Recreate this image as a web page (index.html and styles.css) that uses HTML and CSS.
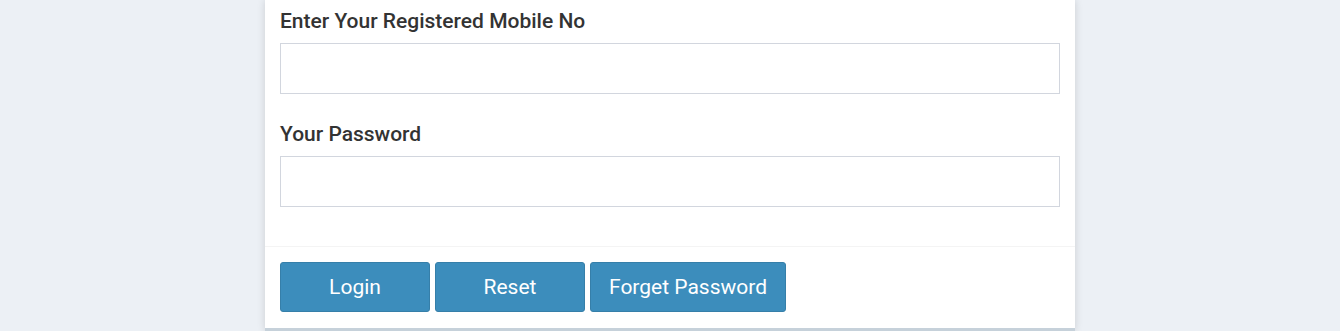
FILE: index.html
```html
<!DOCTYPE html>
<html lang="en">
<head>
<meta charset="utf-8">
<title>Login</title>
<link rel="stylesheet" href="styles.css">
</head>
<body>
<div class="card">
  <form class="card-body">
    <div class="form-group">
      <label class="label" for="mobile">Enter Your Registered Mobile No</label>
      <input class="input" id="mobile" type="text">
    </div>
    <div class="form-group last">
      <label class="label" for="password">Your Password</label>
      <input class="input" id="password" type="password">
    </div>
  </form>
  <div class="card-footer">
    <button class="btn" type="button">Login</button>
    <button class="btn" type="button">Reset</button>
    <button class="btn" type="button">Forget Password</button>
  </div>
</div>
</body>
</html>
```

FILE: styles.css
```css
html, body {
  margin: 0;
  padding: 0;
}
body {
  background: #ecf0f5;
  font-family: Roboto, "Liberation Sans", Arial, sans-serif;
  color: #333;
  height: 331px;
  overflow: hidden;
}
.card {
  width: 810px;
  margin: 0 auto;
  background: #fff;
  box-shadow: 0 0 8px rgba(0, 0, 0, 0.14);
  border-bottom: 3px solid #c6d1da;
}
.card-body {
  margin: 0;
  padding: 8px 15px 39px;
}
.form-group {
  margin-bottom: 27px;
}
.form-group.last {
  margin-bottom: 0;
}
.label {
  display: block;
  font-size: 21px;
  font-weight: 500;
  line-height: 27px;
  margin-bottom: 8px;
  color: #333;
}
.input {
  display: block;
  box-sizing: border-box;
  width: 780px;
  height: 51px;
  margin: 0;
  padding: 6px 12px;
  border: 1px solid #d2d6de;
  border-radius: 0;
  font-family: inherit;
  font-size: 16px;
  background: #fff;
  outline: none;
}
.card-footer {
  border-top: 1px solid #f4f4f4;
  padding: 15px 15px 16px;
  display: flex;
  gap: 5px;
}
.btn {
  box-sizing: border-box;
  height: 50px;
  min-width: 150px;
  padding: 0 18px;
  margin: 0;
  background: #3c8dbc;
  border: 1px solid #367fa9;
  border-radius: 3px;
  color: #fff;
  font-family: inherit;
  font-size: 21px;
  font-weight: 400;
  cursor: pointer;
}
```
